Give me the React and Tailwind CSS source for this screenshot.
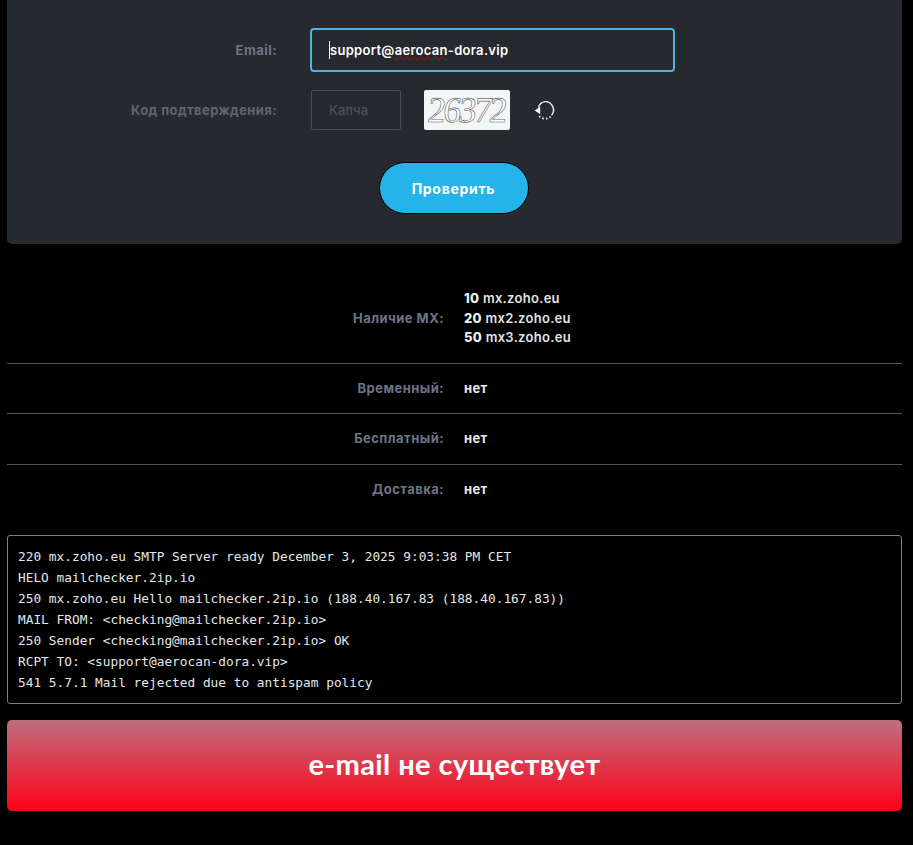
const sans = "font-['Inter','Noto_Sans',sans-serif]";

const rows = [
  { label: "Временный:", value: "нет", height: "h-[50px]", line: true },
  { label: "Бесплатный:", value: "нет", height: "h-[51px]", line: true },
  { label: "Доставка:", value: "нет", height: "h-[50px]", line: false },
];

const mx = [
  { prio: "10", host: "mx.zoho.eu" },
  { prio: "20", host: "mx2.zoho.eu" },
  { prio: "50", host: "mx3.zoho.eu" },
];

const smtpLog = [
  "220 mx.zoho.eu SMTP Server ready December 3, 2025 9:03:38 PM CET",
  "HELO mailchecker.2ip.io",
  "250 mx.zoho.eu Hello mailchecker.2ip.io (188.40.167.83 (188.40.167.83))",
  "MAIL FROM: <checking@mailchecker.2ip.io>",
  "250 Sender <checking@mailchecker.2ip.io> OK",
  "RCPT TO: <support@aerocan-dora.vip>",
  "541 5.7.1 Mail rejected due to antispam policy",
];

function RefreshIcon() {
  return (
    <svg width="24" height="24" viewBox="0 0 24 24" fill="none" className="shrink-0">
      <path d="M5.5 9.5A7.6 7.6 0 0 1 12 3.6a8.4 8.4 0 0 1 6.5 13.8" stroke="#f1f3f5" strokeWidth="1.4" />
      <path d="M17.6 18.6A8.4 8.4 0 0 1 6 18" stroke="#f1f3f5" strokeWidth="1.8" strokeDasharray="1.5 2.1" />
      <path d="M1.7 12.6L7.2 8.8V16.2z" fill="#f1f3f5" />
    </svg>
  );
}

export default function App() {
  return (
    <div className={`w-[913px] h-[845px] overflow-hidden bg-black ${sans}`}>
      <div className="ml-[7px] w-[895px] h-[244px] rounded-b-[5px] bg-[#26292e] flex flex-col pt-[28px]">
        <div className="flex items-center h-[44px]">
          <div className="w-[270px] pt-[2px] text-right text-[13px] font-bold tracking-[0.45px] text-[#6c7587]">Email:</div>
          <div className="ml-[33px] w-[365px] h-[44px] rounded-[4px] border-2 border-[#4fb3dd] flex items-center pl-[17px]">
            <span className="text-[13px] font-semibold text-white border-l border-white leading-[18px] tracking-[0.3px]">
              support@
              <span className="underline decoration-wavy decoration-[#c00] decoration-1">aerocan</span>
              -dora.vip
            </span>
          </div>
        </div>

        <div className="flex items-center h-[40px] mt-[18px]">
          <div className="w-[270px] pt-[2px] text-right text-[13px] font-bold tracking-[0.4px] text-[#5e6674]">Код подтверждения:</div>
          <div className="ml-[34px] w-[90px] h-[40px] pt-[2px] rounded-[2px] border border-[#4a4e56] flex items-center pl-[17px] text-[13px] font-medium text-[#4c5057]">
            Капча
          </div>
          <div className="ml-[23px] w-[86px] h-[40px] rounded-[2px] bg-[#f3f6f7] flex items-center justify-center overflow-hidden">
            <span className="inline-block -skew-x-6 font-['Liberation_Serif',serif] text-[36px] text-white [-webkit-text-stroke:0.6px_#666] tracking-[-2.6px]">
              26372
            </span>
          </div>
          <div className="ml-[23px]">
            <RefreshIcon />
          </div>
        </div>

        <div className="flex justify-center mt-[32px] pr-[2px]">
          <button className="w-[150px] h-[52px] rounded-[26px] border border-black bg-[#25b4e9] text-[14px] font-bold tracking-[0.7px] text-white">
            Проверить
          </button>
        </div>
      </div>

      <div className="ml-[7px] w-[895px] mt-[44px] flex flex-col">
        <div className="flex items-center h-[76px] border-b border-[#55585c] pb-[14px]">
          <div className="w-[437px] pt-[1px] text-right text-[13px] font-bold tracking-[0.45px] text-[#6c7587]">Наличие MX:</div>
          <div className="ml-[20px] flex flex-col text-[13px] leading-[19.5px] font-semibold tracking-[0.3px] text-[#e0e2e6]">
            {mx.map((item) => (
              <div key={item.prio}>
                <span className="font-extrabold text-[#eceef0]">{item.prio}</span> {item.host}
              </div>
            ))}
          </div>
        </div>
        {rows.map((row) => (
          <div
            key={row.label}
            className={`flex items-center ${row.height} ${row.line ? "border-b border-[#55585c]" : ""}`}
          >
            <div className="w-[437px] text-right text-[13px] font-bold tracking-[0.45px] text-[#6c7587]">{row.label}</div>
            <div className="ml-[20px] text-[13px] font-bold tracking-[0.3px] text-[#e6e8ea]">{row.value}</div>
          </div>
        ))}
      </div>

      <div className="ml-[7px] w-[895px] mt-[20px] h-[169px] rounded-[3px] border border-[#808080] px-[10px] pt-[10px] font-['DejaVu_Sans_Mono',monospace] text-[12.8px] leading-[21px] text-[#e3e6ea]">
        {smtpLog.map((line) => (
          <div key={line} className="whitespace-pre">{line}</div>
        ))}
      </div>

      <div className="ml-[7px] w-[895px] mt-[16px] h-[91px] pb-[3px] rounded-[5px] bg-[linear-gradient(180deg,#bd6f7d,#ff0018)] flex items-center justify-center">
        <span className="font-['Lato',sans-serif] text-[29px] font-bold tracking-[0.4px] text-white">e-mail не существует</span>
      </div>
    </div>
  );
}
